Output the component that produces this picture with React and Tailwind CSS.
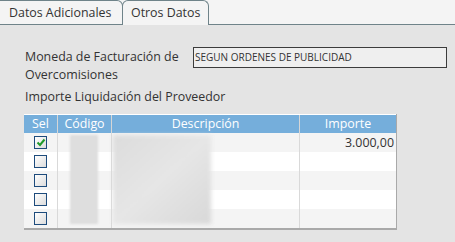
import React from "react";

const rows = [
  { checked: true, importe: "3.000,00" },
  { checked: false, importe: "" },
  { checked: false, importe: "" },
  { checked: false, importe: "" },
  { checked: false, importe: "" },
];

const Checkbox = ({ checked }) => (
  <div className="mx-auto w-[13px] h-[13px] border border-[#1d4b7c] bg-gradient-to-br from-white to-[#dcdcdc] flex items-center justify-center">
    {checked && (
      <svg width="10" height="9" viewBox="0 0 10 9">
        <path d="M1.5 4.5 L4 7 L8.5 1.5" stroke="#1f9a2a" strokeWidth="2" fill="none" />
      </svg>
    )}
  </div>
);

export default function App() {
  return (
    <div className="w-[455px] h-[242px] bg-[#e4e4e4] text-[#333] font-['Open_Sans',sans-serif] text-[12.4px] overflow-hidden">
      {/* tabs */}
      <div className="h-[25px] bg-[#f4f4f4] flex items-end">
        <div className="h-[25px] w-[123px] border-t border-r border-b border-[#6f8389] rounded-tr-[6px] flex items-center pl-[9px] pt-[1px]">
          Datos Adicionales
        </div>
        <div className="h-[25px] w-[87px] -ml-[1px] border-t border-l border-r border-[#6f8389] rounded-t-[6px] flex items-center pl-[8px] pt-[1px]">
          Otros Datos
        </div>
        <div className="flex-1 h-[25px] border-b border-[#6f8389]" />
      </div>

      <div className="pl-[25px] pt-[23px]">
        <div className="flex">
          <div className="w-[168px] leading-[18px]">
            <div>Moneda de Facturación de</div>
            <div>Overcomisiones</div>
          </div>
          <div className="w-[254px] h-[21px] border border-[#3c3c3c] bg-[#efefef] text-[10px] leading-[19px] pl-[1px] -mt-[1px]">
            SEGUN ORDENES DE PUBLICIDAD
          </div>
        </div>
        <div className="mt-[4px] leading-[18px]">Importe Liquidación del Proveedor</div>
      </div>

      <div className="ml-[24px] mt-[8px] w-[373px] border-b-2 border-r border-[#a9a9a9]">
        <div className="flex h-[19px] bg-[#75aedb] text-white border-t border-white">
          <div className="w-[33px] text-center leading-[18px]">Sel</div>
          <div className="w-[54px] text-center leading-[18px] border-l border-[#d6d6d6]">Código</div>
          <div className="w-[188px] text-center leading-[18px] border-l border-[#d6d6d6]">Descripción</div>
          <div className="flex-1 text-center leading-[18px] border-l border-[#d6d6d6]">Importe</div>
        </div>
        <div className="relative">
          {rows.map((r, i) => (
            <div
              key={i}
              className={`flex h-[19px] ${i % 2 === 0 ? "bg-[#f4f4f4]" : "bg-white"}`}
            >
              <div className="w-[33px] flex items-center">
                <Checkbox checked={r.checked} />
              </div>
              <div className="w-[54px] border-l border-[#d9d9d9]" />
              <div className="w-[188px] border-l border-[#d9d9d9]" />
              <div className="flex-1 border-l border-[#d9d9d9] text-right pr-[2px] leading-[19px]">
                {r.importe}
              </div>
            </div>
          ))}
          {/* redacted content */}
          <div className="absolute left-[46px] top-[2px] w-[28px] h-[89px] bg-[#dedede] blur-[1px]" />
          <div className="absolute left-[89px] top-[2px] w-[98px] h-[89px] bg-gradient-to-br from-[#dcdcdc] via-[#e6e6e6] to-[#d8d8d8] blur-[2px]" />
        </div>
      </div>
    </div>
  );
}
